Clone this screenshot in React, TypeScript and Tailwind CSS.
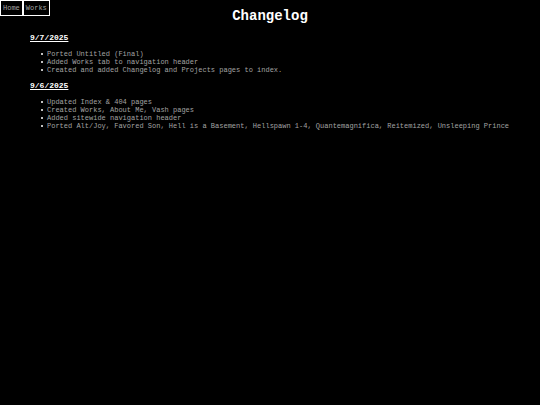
const links = [
  { label: 'Home', href: '#home' },
  { label: 'Works', href: '#works' },
];

const entries = [
  {
    date: '9/7/2025',
    changes: [
      'Ported Untitled (Final)',
      'Added Works tab to navigation header',
      'Created and added Changelog and Projects pages to index.',
    ],
  },
  {
    date: '9/6/2025',
    changes: [
      'Updated Index & 404 pages',
      'Created Works, About Me, Vash pages',
      'Added sitewide navigation header',
      'Ported Alt/Joy, Favored Son, Hell is a Basement, Hellspawn 1-4, Quantemagnifica, Reitemized, Unsleeping Prince',
    ],
  },
];

function NavHeader() {
  return (
    <nav className="absolute top-0 left-0 flex gap-0.5 border border-white bg-white text-[7px] leading-[14px] text-[#a3a3a3]">
      {links.map((link) => (
        <a key={link.label} href={link.href} className="bg-black px-0.5 hover:text-white">
          {link.label}
        </a>
      ))}
    </nav>
  );
}

export default function App() {
  return (
    <div className="relative min-h-screen bg-black font-['Liberation_Mono',monospace] text-[#a3a3a3]">
      <NavHeader />
      <main className="px-[30px] pt-2">
        <h1 className="text-center text-[14px] leading-4 font-bold text-white">Changelog</h1>
        <div className="mt-2 flex flex-col gap-1.5">
          {entries.map((entry) => (
            <section key={entry.date}>
              <h2 className="text-[8px] leading-3 font-bold text-white underline">{entry.date}</h2>
              <ul className="mt-1.5 pl-[11px] text-[7px] leading-[8px]">
                {entry.changes.map((change) => (
                  <li
                    key={change}
                    className="flex items-center gap-1 before:size-0.5 before:shrink-0 before:rounded-full before:bg-white"
                  >
                    {change}
                  </li>
                ))}
              </ul>
            </section>
          ))}
        </div>
      </main>
    </div>
  );
}
